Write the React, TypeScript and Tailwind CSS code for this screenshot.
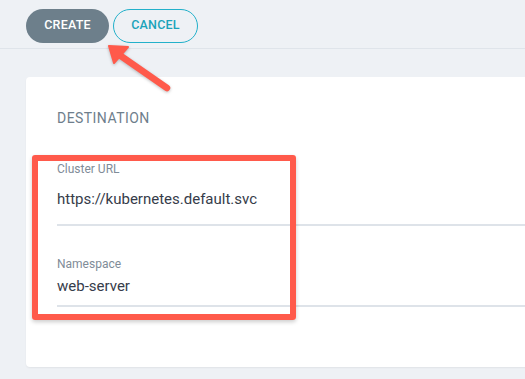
export default function App() {
  return (
    <div className="relative w-[525px] h-[379px] overflow-hidden bg-[#eef1f5] font-['Roboto','Liberation_Sans',sans-serif]">
      {/* toolbar */}
      <div className="h-[49px] border-b border-[#dfe4ea] flex items-center gap-[4px] pl-[26px] pt-[3px]">
        <button className="h-[34px] w-[83px] rounded-full bg-[#6d7f8b] text-white text-[12.5px] font-medium tracking-[0.2px]">
          CREATE
        </button>
        <button className="h-[34px] w-[85px] rounded-full border border-[#22b0ca] text-[#1aa3ba] text-[12.5px] font-medium tracking-[0.2px]">
          CANCEL
        </button>
      </div>

      <div className="pt-[28px] pl-[26px]">
        <div className="w-[540px] h-[290px] bg-white rounded-[4px] shadow-[0_1px_2px_rgba(0,0,0,0.06)] pt-[31px] pl-[31px]">
          <div className="text-[14px] leading-[20px] text-[#6e7e8c] tracking-[0.45px]">DESTINATION</div>

          <div className="mt-[33px] pb-[15px] border-b-2 border-[#dee3e9]">
            <div className="text-[12px] leading-[16px] text-[#7f8c98]">Cluster URL</div>
            <div className="mt-[12px] text-[15px] leading-[20px] text-[#363c4a]">https://kubernetes.default.svc</div>
          </div>

          <div className="mt-[30px] pb-[9px] border-b-2 border-[#dee3e9]">
            <div className="text-[12px] leading-[16px] text-[#7f8c98]">Namespace</div>
            <div className="mt-[4px] text-[15px] leading-[20px] text-[#363c4a]">web-server</div>
          </div>
        </div>
      </div>

      {/* annotation: highlight box */}
      <div className="absolute left-[32px] top-[155px] w-[264px] h-[165px] border-[6px] border-[#ff5a4b] rounded-[3px] shadow-[0_2px_4px_rgba(0,0,0,0.2)]" />

      {/* annotation: arrow */}
      <svg className="absolute left-0 top-0" width="525" height="379" viewBox="0 0 525 379">
        <g style={{ filter: "drop-shadow(0 1px 1.5px rgba(0,0,0,0.25))" }}>
          <line x1="167" y1="88" x2="118" y2="54" stroke="#ff5a4b" strokeWidth="6.5" strokeLinecap="round" />
          <polygon points="109,46 128,47 114,63" fill="#ff5a4b" stroke="#ff5a4b" strokeWidth="2" strokeLinejoin="round" />
        </g>
      </svg>
    </div>
  );
}
